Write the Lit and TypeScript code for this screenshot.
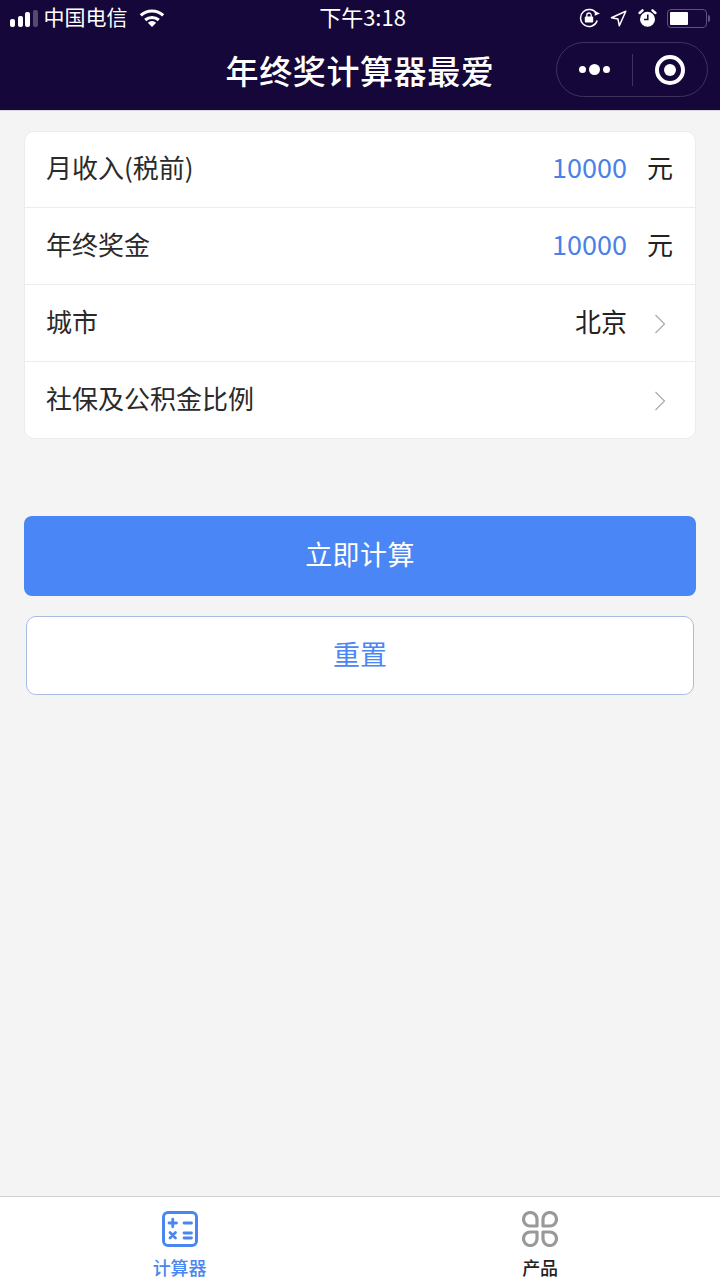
import { LitElement, html, css, svg } from 'lit';
import { customElement, state } from 'lit/decorators.js';

const chevron = html`<svg class="chevron" width="12" height="20" viewBox="0 0 12 20">
  <path d="M1.500 1l9 9-9 9" fill="none" stroke="#aaa" stroke-width="1.200"/>
</svg>`;

const wifi = svg`<svg class="wifi" width="26" height="18" viewBox="0 0 26 18" fill="none" stroke="#fff" stroke-width="3.200">
  <path d="M1.800 6.400a16.500 16.500 0 0 1 22.400 0"/><path d="M6.200 11a10.500 10.500 0 0 1 13.600 0"/>
  <path d="M13 18l-4.200-4.300a6.200 6.200 0 0 1 8.400 0z" fill="#fff" stroke="none"/>
</svg>`;

const lockIcon = svg`<svg class="lock" width="21" height="20" viewBox="0 0 21 20" fill="none" stroke="#fff">
  <path d="M18.200 12.500a8.500 8.500 0 1 1-.6-6.500" stroke-width="1.500"/>
  <path d="M21 5.500l-5.300 2.200.1-4.800z" fill="#fff" stroke="none"/>
  <rect x="5.800" y="8.500" width="8.400" height="6" rx="1" fill="#fff" stroke="none"/>
  <path d="M7.800 9V7.200a2.200 2.200 0 0 1 4.400 0V9" stroke-width="1.300"/>
</svg>`;

const locationIcon = svg`<svg width="17" height="17" viewBox="0 0 17 17" fill="none" stroke="#fff" stroke-width="1.500">
  <path d="M15.800 1.200L1.400 7.800l6.600 1.300 1.300 6.700z" stroke-linejoin="round"/>
</svg>`;

const alarmIcon = svg`<svg width="19" height="18" viewBox="0 0 19 18">
  <circle cx="9.500" cy="10.200" r="7.500" fill="#fff"/>
  <path d="M1.600 4L4.500 1.300M17.400 4L14.500 1.300" stroke="#fff" stroke-width="2.400" stroke-linecap="round"/>
  <path d="M9.800 5.500v5H6" fill="none" stroke="#15073a" stroke-width="1.500"/>
</svg>`;

const calcIcon = svg`<svg width="38" height="38" viewBox="0 0 38 38" fill="none" stroke="#4a86f2">
  <rect x="2.500" y="2.500" width="33" height="33" rx="4.500" stroke-width="3"/>
  <g stroke-width="2.800" stroke-linecap="round">
    <path d="M8 13h7.500M11.750 9.250v7.500M23 13h7.500"/>
    <path d="M9 22.500l5.500 5.500M14.500 22.500l-5.500 5.500"/>
    <path d="M23 23h7.500M23 28h7.500"/>
  </g>
</svg>`;

const productIcon = svg`<svg class="product" width="36" height="36" viewBox="0 0 36 36" fill="none" stroke="#999" stroke-width="3.200" stroke-linejoin="round">
  <path d="M15 15H8.250a6.750 6.750 0 1 1 6.750-6.750z"/>
  <path d="M21 15V8.250a6.750 6.750 0 1 1 6.750 6.750z"/>
  <path d="M15 21V27.750a6.750 6.750 0 1 1-6.750-6.750z"/>
  <path d="M21 21H27.750a6.750 6.750 0 1 1-6.750 6.750z"/>
</svg>`;

@customElement('app-root')
export class AppRoot extends LitElement {
  @state() monthly = '10000';
  @state() bonus = '10000';
  @state() city = '北京';

  static styles = css`
    :host {
      display: flex;
      flex-direction: column;
      height: 1280px;
      background: #f4f4f5;
      font-family: "Noto Sans CJK SC", "Liberation Sans", sans-serif;
      color: #222;
    }
    .top {
      height: 110px;
      background: #15073a;
      color: #fff;
      border-bottom: 1px solid #d8d8dc;
      flex: none;
    }
    .status {
      height: 36px;
      display: flex;
      align-items: center;
      padding: 0 10px;
      font-size: 21px;
    }
    .status-left {
      display: flex;
      align-items: center;
      flex: 1;
    }
    .signal {
      display: flex;
      align-items: flex-end;
      gap: 2.500px;
      height: 17px;
      margin-right: 6px;
    }
    .signal i {
      width: 5px;
      border-radius: 2px;
      background: #fff;
    }
    .signal i:last-child { background: #55496f; }
    .carrier { margin: -4px 11px 0 0; line-height: 30px; }
    .time {
      flex: none;
      margin: -4px 0 0 5px;
      font-size: 22px;
      line-height: 30px;
    }
    .status-right {
      flex: 1;
      display: flex;
      align-items: center;
      justify-content: flex-end;
      gap: 11px;
    }
    .status-right svg { display: block; }
    .status-right .lock { margin-right: -1px; }
    .battery {
      display: flex;
      align-items: center;
      gap: 1px;
      margin-left: -1px;
    }
    .battery-body {
      width: 40px;
      height: 19px;
      box-sizing: border-box;
      padding: 2px;
      border: 1.500px solid #5c5180;
      border-radius: 4px;
    }
    .battery-fill {
      width: 18px;
      height: 100%;
      background: #fff;
      border-radius: 1px;
    }
    .battery-tip {
      width: 2px;
      height: 7px;
      background: #5c5180;
      border-radius: 0 2px 2px 0;
    }
    .nav {
      height: 74px;
      display: flex;
      align-items: center;
      justify-content: center;
      position: relative;
    }
    .title {
      font-size: 33px;
      font-weight: 500;
      letter-spacing: 0.600px;
      line-height: 46px;
      margin-top: -6px;
    }
    .capsule {
      position: absolute;
      right: 12px;
      top: 6px;
      width: 152px;
      height: 55px;
      box-sizing: border-box;
      border: 1px solid #3e3360;
      border-radius: 28px;
      display: flex;
      align-items: center;
    }
    .capsule-half {
      flex: 1;
      display: flex;
      align-items: center;
      justify-content: center;
    }
    .capsule-sep {
      width: 1px;
      height: 32px;
      background: #3e3360;
    }
    .dots {
      display: flex;
      align-items: center;
      gap: 3px;
    }
    .dots i {
      width: 7px;
      height: 7px;
      border-radius: 50%;
      background: #fff;
    }
    .dots i:nth-child(2) {
      width: 11px;
      height: 11px;
    }
    .target {
      width: 30px;
      height: 30px;
      box-sizing: border-box;
      border: 4px solid #fff;
      border-radius: 50%;
      display: flex;
      align-items: center;
      justify-content: center;
    }
    .target i {
      width: 12px;
      height: 12px;
      border-radius: 50%;
      background: #fff;
    }
    main {
      flex: 1;
      padding: 20px 24px;
    }
    .card {
      background: #fff;
      border: 1px solid #ececee;
      border-radius: 10px;
      overflow: hidden;
    }
    .row {
      height: 70px;
      display: flex;
      align-items: center;
      padding: 0 22px 6px 21px;
      font-size: 26px;
      border-top: 1px solid #ececee;
    }
    .row:first-child { border-top: 0; height: 69px; }
    .row .label { flex: 1; color: #2a2a2a; }
    .value { color: #4a80e8; font-size: 27px; }
    .city { color: #222; }
    .unit { margin: 0 1px 0 20px; width: 25px; }
    .chevron { margin: 8px 7px 0 27px; display: block; }
    .btn {
      display: flex;
      align-items: center;
      justify-content: center;
      box-sizing: border-box;
      padding-bottom: 5px;
      font-size: 27px;
      border-radius: 8px;
    }
    .primary {
      margin-top: 77px;
      height: 80px;
      background: #4a86f5;
      color: #fff;
      letter-spacing: 0.400px;
    }
    .secondary {
      margin: 20px 2px 0;
      height: 79px;
      background: #fff;
      color: #4a86f5;
      border: 1px solid #a9bde2;
      border-radius: 10px;
    }
    .tabbar {
      height: 83px;
      flex: none;
      display: flex;
      background: #fff;
      border-top: 1px solid #cfcfd2;
    }
    .tab {
      flex: 1;
      display: flex;
      flex-direction: column;
      align-items: center;
      padding-top: 13px;
      font-size: 18px;
      font-weight: 500;
      color: #222;
    }
    .tab svg { display: block; }
    .tab .product { margin: 1px; }
    .tab span { margin-top: 8px; line-height: 22px; letter-spacing: -0.200px; }
    .tab.on { color: #4a86f2; }
    .tab.on span { margin-right: 1px; }
  `;

  renderStatus() {
    return html`<div class="status">
      <div class="status-left">
        <div class="signal">
          <i style="height:8px"></i><i style="height:11px"></i><i style="height:15px"></i><i style="height:17px"></i>
        </div>
        <span class="carrier">中国电信</span>
        ${wifi}
      </div>
      <div class="time">下午3:18</div>
      <div class="status-right">
        ${lockIcon}${locationIcon}${alarmIcon}
        <div class="battery">
          <div class="battery-body"><div class="battery-fill"></div></div>
          <div class="battery-tip"></div>
        </div>
      </div>
    </div>`;
  }

  render() {
    return html`
      <div class="top">
        ${this.renderStatus()}
        <div class="nav">
          <div class="title">年终奖计算器最爱</div>
          <div class="capsule">
            <div class="capsule-half"><div class="dots"><i></i><i></i><i></i></div></div>
            <div class="capsule-sep"></div>
            <div class="capsule-half"><div class="target"><i></i></div></div>
          </div>
        </div>
      </div>
      <main>
        <div class="card">
          <div class="row">
            <span class="label">月收入(税前)</span>
            <span class="value">${this.monthly}</span><span class="unit">元</span>
          </div>
          <div class="row">
            <span class="label">年终奖金</span>
            <span class="value">${this.bonus}</span><span class="unit">元</span>
          </div>
          <div class="row">
            <span class="label">城市</span>
            <span class="city">${this.city}</span>${chevron}
          </div>
          <div class="row">
            <span class="label">社保及公积金比例</span>${chevron}
          </div>
        </div>
        <div class="btn primary">立即计算</div>
        <div class="btn secondary">重置</div>
      </main>
      <div class="tabbar">
        <div class="tab on">${calcIcon}<span>计算器</span></div>
        <div class="tab">${productIcon}<span>产品</span></div>
      </div>
    `;
  }
}
